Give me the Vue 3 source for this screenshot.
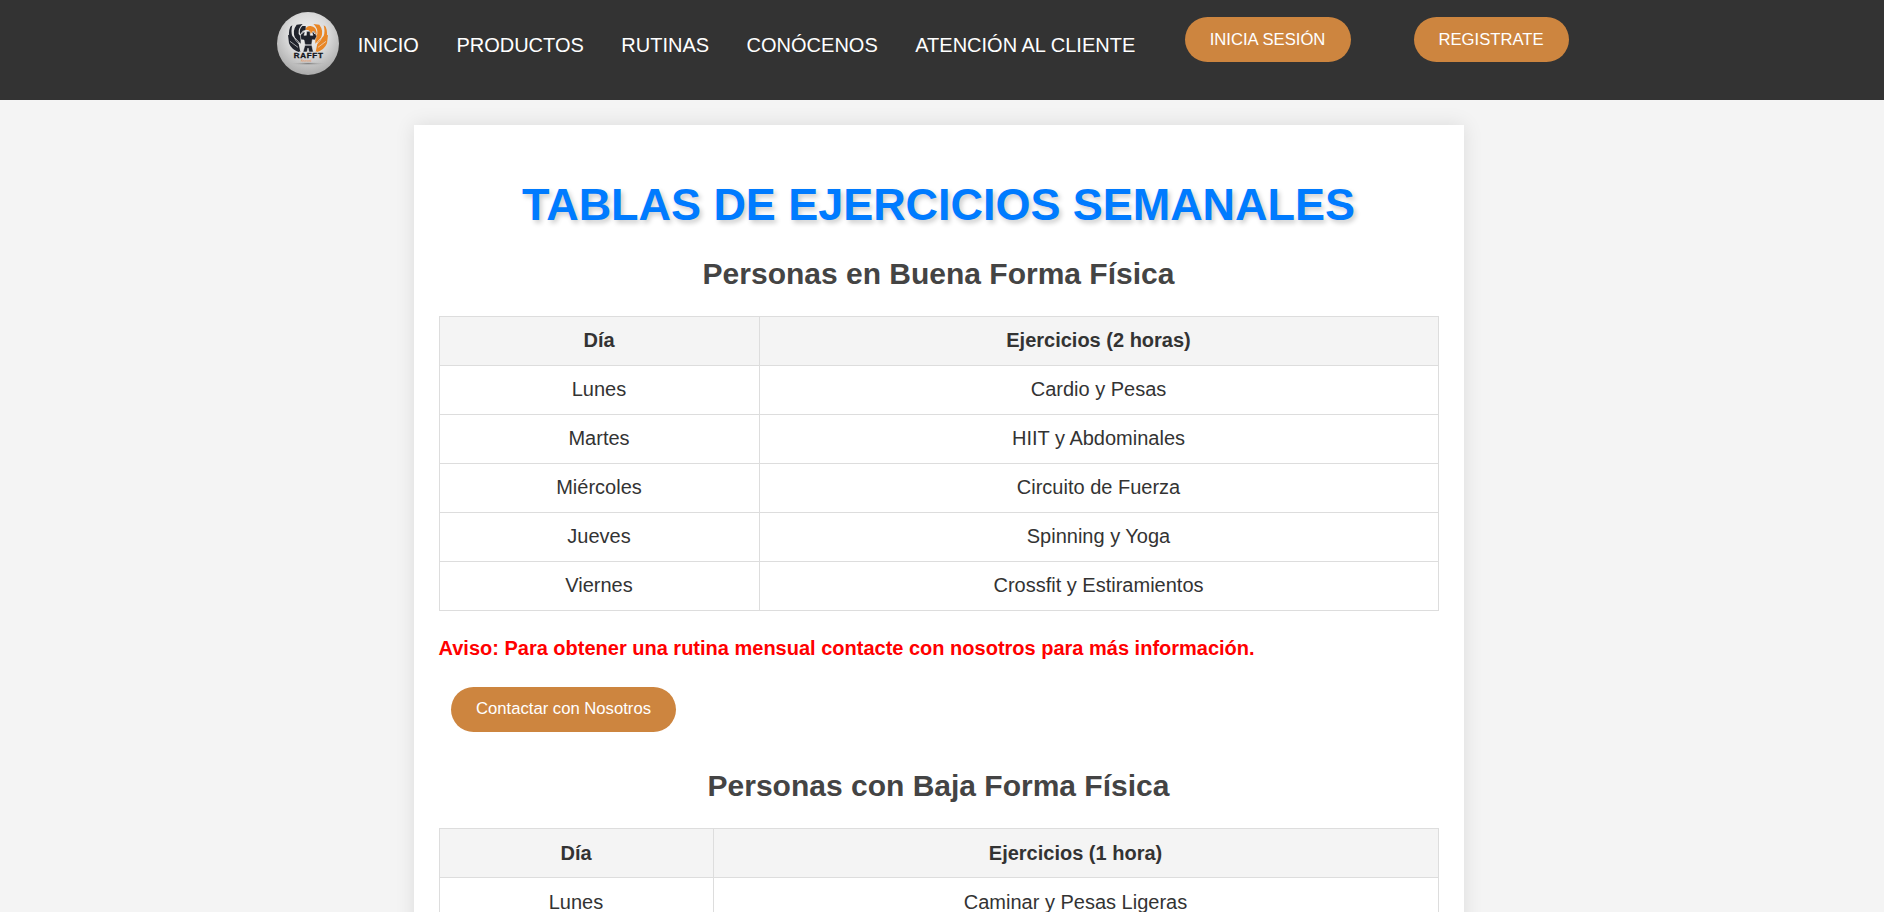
<script setup>
const links = ['INICIO', 'PRODUCTOS', 'RUTINAS', 'CONÓCENOS', 'ATENCIÓN AL CLIENTE']

const fitRows = [
  ['Lunes', 'Cardio y Pesas'],
  ['Martes', 'HIIT y Abdominales'],
  ['Miércoles', 'Circuito de Fuerza'],
  ['Jueves', 'Spinning y Yoga'],
  ['Viernes', 'Crossfit y Estiramientos'],
]

const beginnerRows = [['Lunes', 'Caminar y Pesas Ligeras']]
</script>

<template>
  <div class="page">
    <header class="header">
      <svg class="logo" viewBox="21 24 186 189" role="img" aria-label="RAFFT">
        <defs>
          <radialGradient id="disc" cx="0.5" cy="0.36" r="0.66">
            <stop offset="0" stop-color="#f2f2f2" />
            <stop offset="0.5" stop-color="#dadada" />
            <stop offset="1" stop-color="#a8a8a8" />
          </radialGradient>
          <radialGradient id="shade">
            <stop offset="0" stop-color="#777777" />
            <stop offset="1" stop-color="#c4c4c4" stop-opacity="0" />
          </radialGradient>
        </defs>
        <ellipse cx="114" cy="118.500" rx="93" ry="94.500" fill="url(#disc)" />
        <ellipse cx="114" cy="179" rx="58" ry="5" fill="url(#shade)" />
        <g fill="#20232c">
          <path d="M61 68 L67 64 Q62 82 67 96 L85 114 L91 144 Q68 134 60 112 Q53 86 61 68 Z" />
          <path d="M80 62 L98 60 Q84 72 86 90 L92 97 L92 119 L74 100 Q67 79 80 62 Z" />
          <path d="M97 66 L107 66 L107 78 L99 80 L91 91 Q86 76 97 66 Z" />
          <path d="M54 92 L60 95 L63 112 L82 130 L88 145 Q64 137 57 118 Z" />
        </g>
        <g fill="#e98625">
          <path d="M167 68 L161 64 Q166 82 161 96 L143 114 L137 144 Q160 134 168 112 Q175 86 167 68 Z" />
          <path d="M148 62 L130 60 Q144 72 142 90 L136 97 L136 119 L154 100 Q161 79 148 62 Z" />
          <path d="M107 77 Q108 65 122 66 Q139 68 140 87 L136 100 L129 82 L122 90 L116 79 Z" />
          <path d="M174 92 L168 95 L165 112 L146 130 L140 145 Q164 137 171 118 Z" />
        </g>
        <g fill="none" stroke="#e9e9e9" stroke-width="2">
          <path d="M70 66 Q62 98 88 121 M60 112 L84 130" />
          <path d="M158 66 Q166 98 140 121 M168 112 L144 130" />
        </g>
        <path d="M91 95 L98 82 L105 85 L102 94 L109 94 L110 82 L120 82 L121 94 L129 94 L126 85 L133 82 L140 97 L135 108 L127 107 L125 122 L130 144 L117 144 L114 132 L111 144 L99 144 L105 122 L102 108 L93 107 Z" fill="#20232c" stroke="#f2f2f2" stroke-width="1.500" />
        <path d="M96 89 L101 83 M130 83 L135 90 M104 123 L125 123" stroke="#f5f5f5" stroke-width="3" />
        <text x="71" y="163" textLength="90" lengthAdjust="spacingAndGlyphs" class="logo-name">RAFFT</text>
        <text x="93" y="175" textLength="31" lengthAdjust="spacingAndGlyphs" class="logo-sub">Reserved</text>
      </svg>
      <nav class="nav">
        <a v-for="link in links" :key="link" class="link">{{ link }}</a>
      </nav>
      <button class="button login">INICIA SESIÓN</button>
      <button class="button register">REGISTRATE</button>
    </header>

    <main class="card">
      <h1>TABLAS DE EJERCICIOS SEMANALES</h1>
      <h2>Personas en Buena Forma Física</h2>
      <table class="table fit">
        <thead>
          <tr><th class="day">Día</th><th>Ejercicios (2 horas)</th></tr>
        </thead>
        <tbody>
          <tr v-for="row in fitRows" :key="row[0]"><td>{{ row[0] }}</td><td>{{ row[1] }}</td></tr>
        </tbody>
      </table>
      <p class="notice">Aviso: Para obtener una rutina mensual contacte con nosotros para más información.</p>
      <button class="button contact">Contactar con Nosotros</button>
      <h2 class="second">Personas con Baja Forma Física</h2>
      <table class="table beginner">
        <thead>
          <tr><th class="day">Día</th><th>Ejercicios (1 hora)</th></tr>
        </thead>
        <tbody>
          <tr v-for="row in beginnerRows" :key="row[0]"><td>{{ row[0] }}</td><td>{{ row[1] }}</td></tr>
        </tbody>
      </table>
    </main>
  </div>
</template>

<style>
body {
  margin: 0;
  background: #f4f4f4;
}
</style>

<style scoped>
.page {
  height: 912px;
  overflow: hidden;
  background: #f4f4f4;
  color: #333;
  font: 20px/24px "Liberation Sans", Arial, sans-serif;
}
.header {
  display: flex;
  align-items: flex-start;
  box-sizing: border-box;
  height: 100px;
  padding: 12px 0 0 277px;
  background: #333;
}
.logo {
  display: block;
  flex: none;
  width: 62px;
  height: 63px;
}
.logo-name {
  font: bold 20px "Liberation Sans", Arial, sans-serif;
  letter-spacing: 2px;
  fill: #15171d;
  stroke: #15171d;
  stroke-width: 1px;
}
.logo-sub {
  font: italic 9px "Liberation Sans", Arial, sans-serif;
  fill: #e98a48;
}
.nav {
  display: flex;
  gap: 37.5px;
  margin: 21px 0 0 18.75px;
}
.link {
  color: #fff;
  white-space: nowrap;
}
.button {
  display: block;
  flex: none;
  box-sizing: border-box;
  height: 45px;
  padding: 0;
  border: 0;
  border-radius: 25px;
  background: #cd853f;
  color: #fff;
  font: 16.667px/20px "Liberation Sans", Arial, sans-serif;
  white-space: nowrap;
}
.login {
  width: 166px;
  margin: 5px 0 0 49.25px;
}
.register {
  width: 155px;
  margin: 5px 0 0 63px;
}
.card {
  box-sizing: border-box;
  width: 1050px;
  height: 900px;
  margin: 25px 0 0 413.5px;
  padding: 54px 25px 0;
  background: #fff;
  box-shadow: 0 0 18.75px rgba(0, 0, 0, 0.1);
}
h1 {
  margin: 0;
  color: #007bff;
  font-size: 45px;
  letter-spacing: -0.05px;
  line-height: 52px;
  text-align: center;
  white-space: nowrap;
  text-shadow: 2.5px 2.5px 5px rgba(0, 0, 0, 0.2);
}
h2 {
  margin: 25px 0;
  color: #444;
  font-size: 30px;
  line-height: 35px;
  text-align: center;
}
.table {
  width: 1000px;
  border-collapse: collapse;
  table-layout: fixed;
}
.table th,
.table td {
  box-sizing: border-box;
  height: 49px;
  padding: 0 0 2px;
  border: 1px solid #ddd;
  text-align: center;
}
.table th {
  background: #f4f4f4;
}
.table.beginner th,
.table.beginner td {
  padding-bottom: 0;
}
.fit .day {
  width: 320px;
}
.beginner .day {
  width: 274px;
}
.notice {
  margin: 25px 0 27px;
  color: #f00;
  font-weight: bold;
}
.contact {
  width: 225px;
  margin-left: 12.5px;
  padding-bottom: 2px;
}
.second {
  margin-top: 36px;
}
</style>
